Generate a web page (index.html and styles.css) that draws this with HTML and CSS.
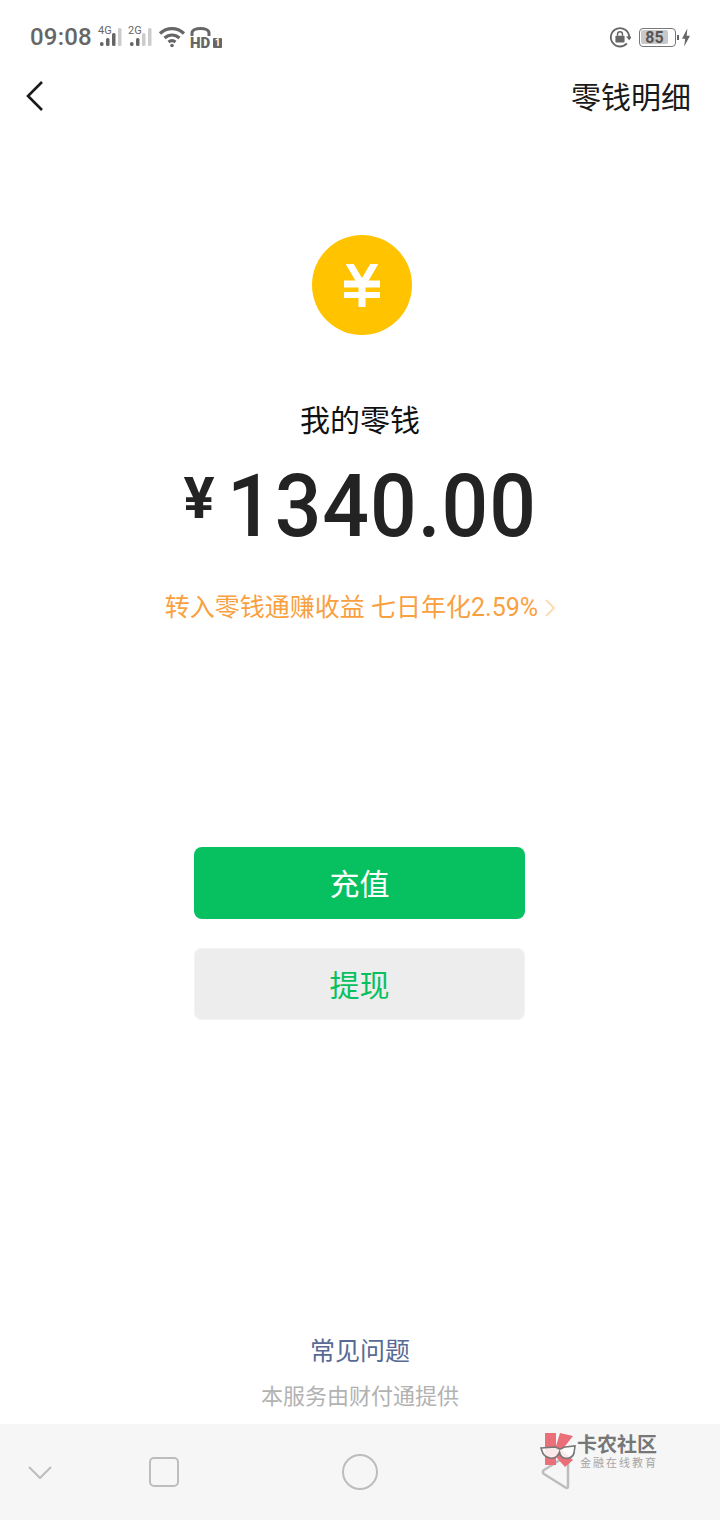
FILE: index.html
```html
<!DOCTYPE html>

<html>
<head>
    <title>零钱</title>
    <meta charset="UTF-8">
    <meta name="viewport" content="width=device-width user-scalable=no">
    <link rel="stylesheet" href="styles.css">
</head>
<body>

<div id="page">
    <div id="statusbar">
        <div class="status-left">
            <span class="time">09:08</span>
            <div class="sim">
                <span class="sim-label">4G</span>
                <svg width="24" height="20" viewBox="0 0 24 20">
                    <rect x="2" y="15" width="3.500" height="4" rx="1.500" fill="#666"/>
                    <rect x="8" y="11" width="3.500" height="8" rx="1.500" fill="#666"/>
                    <rect x="14" y="6" width="3.500" height="13" rx="1.500" fill="#666"/>
                    <rect x="20" y="1" width="3.500" height="18" rx="1.500" fill="#ccc"/>
                </svg>
            </div>
            <div class="sim">
                <span class="sim-label">2G</span>
                <svg width="24" height="20" viewBox="0 0 24 20">
                    <rect x="2" y="15" width="3.500" height="4" rx="1.500" fill="#666"/>
                    <rect x="8" y="11" width="3.500" height="8" rx="1.500" fill="#666"/>
                    <rect x="14" y="6" width="3.500" height="13" rx="1.500" fill="#ccc"/>
                    <rect x="20" y="1" width="3.500" height="18" rx="1.500" fill="#ccc"/>
                </svg>
            </div>
            <svg class="wifi" width="28" height="22" viewBox="0 0 28 22" fill="none" stroke="#666" stroke-width="3.200">
                <path d="M2 7.500C9 1 19 1 26 7.500"/>
                <path d="M6.500 12C11 8 17 8 21.500 12"/>
                <path d="M10.500 16C12.500 14.500 15.500 14.500 17.500 16"/>
                <circle cx="14" cy="19.500" r="1.800" fill="#666" stroke="none"/>
            </svg>
            <div class="hd">
                <svg width="21" height="9" viewBox="0 0 21 9" fill="none" stroke="#666" stroke-width="3">
                    <path d="M2 9V6C2 0 19 0 19 6V9"/>
                </svg>
                <div class="hd-row">
                    <span class="hd-text">HD</span>
                    <span class="hd-num">1</span>
                </div>
            </div>
        </div>
        <div class="status-right">
            <svg class="lock" width="22" height="22" viewBox="0 0 24 24" fill="none">
                <path d="M19.500 19A10 10 0 1 1 22 12" stroke="#666" stroke-width="2"/>
                <path d="M18.500 11.500h7l-3.500 4z" fill="#666"/>
                <rect x="7" y="10.500" width="10" height="7.500" rx="1" fill="#666"/>
                <path d="M9.300 10.500V9a2.700 2.700 0 0 1 5.400 0v1.500" stroke="#666" stroke-width="1.600"/>
            </svg>
            <div class="battery">
                <div class="battery-body"><span class="battery-level">85</span></div>
                <div class="battery-tip"></div>
            </div>
            <svg class="bolt" width="8" height="19" viewBox="0 0 9 20">
                <path d="M6 0L0 11.500h3.500L2.500 20L9 8H5.300z" fill="#666"/>
            </svg>
        </div>
    </div>

    <div id="topnav">
        <svg class="nav-arrow" width="20" height="32" viewBox="0 0 20 32" fill="none" stroke="#1a1a1a" stroke-width="2.600">
            <path d="M17 2L3 16L17 30"/>
        </svg>
        <span class="nav-title">零钱明细</span>
    </div>

    <div id="balance">
        <div class="coin">
            <svg width="36" height="43" viewBox="0 0 36 43" fill="none" stroke="#fff" stroke-width="7">
                <path d="M4 -3L18 21L32 -3"/>
                <path d="M18 20V43"/>
                <path d="M0 20H36"/>
                <path d="M0 31H36" stroke-width="6"/>
            </svg>
        </div>
        <div class="balance-title">我的零钱</div>
        <div class="amount">
            <span class="currency">¥</span>
            <span class="number">1340.00</span>
        </div>
        <div class="promo">
            <span>转入零钱通赚收益 七日年化2.59%</span>
            <svg width="10" height="18" viewBox="0 0 10 18" fill="none" stroke="#fcdcb8" stroke-width="2">
                <path d="M1 1L9 9L1 17"/>
            </svg>
        </div>
    </div>

    <div id="actions">
        <div class="btn btn-primary">充值</div>
        <div class="btn btn-secondary">提现</div>
    </div>

    <div id="footer">
        <div class="faq">常见问题</div>
        <div class="provider">本服务由财付通提供</div>
    </div>

    <div id="navbar">
        <svg class="nav-down" width="24" height="14" viewBox="0 0 24 14" fill="none" stroke="#bdbdbd" stroke-width="2">
            <path d="M1 2L12 13L23 2"/>
        </svg>
        <div class="nav-square"></div>
        <div class="nav-circle"></div>
        <svg class="nav-back" width="30" height="36" viewBox="0 0 30 36" fill="none" stroke="#bdbdbd" stroke-width="2.500">
            <path d="M27 3.500V32.500C27 34 26 34.500 24.500 33.500L3 20C1.500 19 1.500 17 3 16L24.500 2.500C26 1.500 27 2 27 3.500Z"/>
        </svg>
    </div>

    <div id="watermark">
        <svg width="36" height="36" viewBox="0 0 36 36">
            <path d="M5 0H16V13L20 0L33 3L22 17L33 27L25 34L16 24V32H5Z" fill="#ea6f78"/>
            <path d="M1 15L15 14C17 14 18 16 20 16C22 16 23 14 25 14L35 13L34 20C33 25 27 26 24 25C21 24 20 22 19.500 19C18 23 15 26 10 25C5 24 3 22 2 18Z" fill="#fff" fill-opacity=".85" stroke="#777" stroke-width="1.600"/>
        </svg>
        <div class="mark-text">
            <div class="mark-name">卡农社区</div>
            <div class="mark-sub">金融在线教育</div>
        </div>
    </div>
</div>

</body>
</html>
```

FILE: styles.css
```css
body{
    margin: 0;
    background-color: #ffffff;
    font-family: Roboto, "Noto Sans CJK SC", sans-serif;
}

#page{
    position: relative;
    display: flex;
    flex-direction: column;
    width: 720px;
    height: 1520px;
    overflow: hidden;
}

#statusbar{
    display: flex;
    align-items: center;
    justify-content: space-between;
    height: 74px;
    padding: 0 30px;
    flex: none;
}

.status-left,
.status-right{
    display: flex;
    align-items: center;
}

.time{
    width: 68px;
    font-size: 24px;
    font-weight: 500;
    letter-spacing: .2px;
    color: #666666;
}

.sim{
    position: relative;
    width: 24px;
    height: 20px;
    margin-right: 6px;
}

.sim svg{
    display: block;
}

.sim-label{
    position: absolute;
    left: 0;
    top: -1px;
    font-size: 11px;
    line-height: 10px;
    color: #666666;
}

.wifi{
    margin-right: 4px;
}

.hd{
    display: flex;
    flex-direction: column;
    align-items: flex-start;
    margin-top: 1px;
}

.hd svg{
    display: block;
}

.hd-row{
    display: flex;
    align-items: center;
    height: 12px;
    margin-top: 1px;
}

.hd-text{
    width: 23px;
    font-size: 15px;
    line-height: 12px;
    font-weight: 900;
    color: #666666;
}

.hd-num{
    width: 9px;
    height: 10px;
    background-color: #666666;
    border-radius: 1px;
    color: #ffffff;
    font-size: 10px;
    line-height: 10px;
    font-weight: 700;
    text-align: center;
}

.lock{
    margin-right: 8px;
}

.battery{
    display: flex;
    align-items: center;
}

.battery-body{
    box-sizing: border-box;
    width: 37px;
    height: 19px;
    padding: 1px 5px 1px 1px;
    border: 1.500px solid #777777;
    border-radius: 4px;
}

.battery-level{
    display: block;
    width: 27px;
    height: 14px;
    background-color: #c9c9c9;
    border-radius: 2px;
    font-size: 16px;
    line-height: 15px;
    font-weight: 700;
    color: #555555;
    text-align: center;
}

.battery-tip{
    width: 2px;
    height: 5px;
    margin-left: 1px;
    background-color: #666666;
}

.bolt{
    margin-left: 3px;
}

#topnav{
    display: flex;
    align-items: center;
    justify-content: space-between;
    height: 46px;
    padding: 0 29px 0 25px;
    flex: none;
}

.nav-arrow{
    margin-top: -2px;
}

.nav-title{
    margin-top: 2px;
    font-size: 30px;
    line-height: 46px;
    color: #1a1a1a;
}

#balance{
    display: flex;
    flex-direction: column;
    align-items: center;
    flex: none;
}

.coin{
    display: flex;
    align-items: center;
    justify-content: center;
    width: 100px;
    height: 100px;
    margin: 115px 0 0 4px;
    border-radius: 50%;
    background-color: #ffc300;
}

.balance-title{
    margin-top: 64px;
    font-size: 30px;
    line-height: 44px;
    color: #111111;
}

.amount{
    display: flex;
    align-items: center;
    margin-top: 13px;
    color: #232323;
}

.currency{
    font-size: 58px;
    line-height: 100px;
    font-weight: 700;
    margin: -16px 12px 0 0;
}

/* digits in the shot are narrower than Roboto */
.number{
    margin-right: -18px;
    font-size: 87px;
    line-height: 100px;
    font-weight: 500;
    letter-spacing: 1px;
    transform: scaleX(.945);
    transform-origin: left center;
}

.promo{
    display: flex;
    align-items: center;
    gap: 7px;
    margin-top: 34px;
    font-size: 25px;
    line-height: 36px;
    color: #f9a03f;
}

#actions{
    display: flex;
    flex-direction: column;
    align-items: center;
    gap: 29px;
    margin-top: 221px;
    padding-right: 1px;
    flex: none;
}

.btn{
    width: 331px;
    height: 72px;
    border-radius: 8px;
    font-size: 30px;
    line-height: 76px;
    text-align: center;
}

.btn-primary{
    background-color: #07c160;
    color: #ffffff;
}

.btn-secondary{
    background-color: #ededed;
    color: #07c160;
    box-shadow: inset 0 0 0 1px #f3f3f3;
}

#footer{
    display: flex;
    flex-direction: column;
    align-items: center;
    margin-top: auto;
    padding-bottom: 11px;
}

.faq{
    font-size: 25px;
    line-height: 36px;
    color: #576b95;
}

.provider{
    margin-top: 11px;
    font-size: 22px;
    line-height: 32px;
    color: #b2b2b2;
}

#navbar{
    display: flex;
    align-items: center;
    height: 96px;
    padding-left: 28px;
    background-color: #f6f6f6;
    flex: none;
}

.nav-down{
    margin-right: 97px;
}

.nav-square{
    width: 26px;
    height: 26px;
    margin-right: 163px;
    border: 2px solid #bdbdbd;
    border-radius: 5px;
}

.nav-circle{
    width: 32px;
    height: 32px;
    margin-right: 163px;
    border: 2px solid #bdbdbd;
    border-radius: 50%;
}

#watermark{
    position: absolute;
    left: 540px;
    top: 1433px;
    display: flex;
    align-items: flex-start;
}

.mark-text{
    margin-left: 1px;
}

.mark-name{
    font-size: 20px;
    line-height: 24px;
    font-weight: 700;
    color: #777777;
}

.mark-sub{
    margin: 0 0 0 3px;
    font-size: 11px;
    line-height: 14px;
    color: #a5a5a5;
    letter-spacing: 2px;
}
```
